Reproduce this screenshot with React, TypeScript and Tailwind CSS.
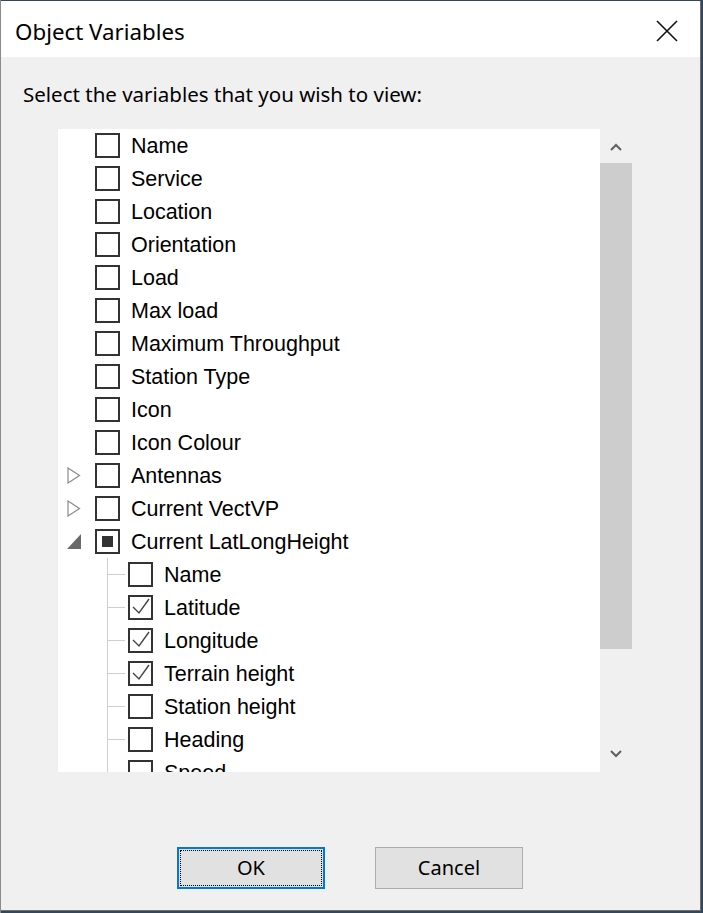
import React from "react";

type Row = {
  label: string;
  state?: "none" | "checked" | "partial";
  expander?: "closed" | "open";
};

const topRows: Row[] = [
  { label: "Name" },
  { label: "Service" },
  { label: "Location" },
  { label: "Orientation" },
  { label: "Load" },
  { label: "Max load" },
  { label: "Maximum Throughput" },
  { label: "Station Type" },
  { label: "Icon" },
  { label: "Icon Colour" },
  { label: "Antennas", expander: "closed" },
  { label: "Current VectVP", expander: "closed" },
  { label: "Current LatLongHeight", expander: "open", state: "partial" },
];

const childRows: Row[] = [
  { label: "Name" },
  { label: "Latitude", state: "checked" },
  { label: "Longitude", state: "checked" },
  { label: "Terrain height", state: "checked" },
  { label: "Station height" },
  { label: "Heading" },
  { label: "Speed" },
];

const Checkbox = ({ state = "none" }: { state?: Row["state"] }) => (
  <div className="relative flex h-[25px] w-[25px] shrink-0 items-center justify-center border-2 border-[#333333] bg-white">
    {state === "partial" && <div className="h-[11px] w-[11px] bg-[#333333]" />}
    {state === "checked" && (
      <svg width="21" height="21" viewBox="0 0 21 21" className="absolute left-0 top-0">
        <polyline points="3,10 9,16 19,2" fill="none" stroke="#444444" strokeWidth="1.4" />
      </svg>
    )}
  </div>
);

const Expander = ({ kind }: { kind?: Row["expander"] }) => {
  if (kind === "closed")
    return (
      <svg width="14" height="17" viewBox="0 0 14 17">
        <polygon points="1,1 12.5,8.5 1,16" fill="none" stroke="#8a8a8a" strokeWidth="1.2" />
      </svg>
    );
  if (kind === "open")
    return (
      <svg width="14" height="17" viewBox="0 0 14 17">
        <polygon points="14,1 14,16 0,16" fill="#6a6a6a" />
      </svg>
    );
  return <div className="w-[14px]" />;
};

const itemFont = { fontFamily: '"Liberation Sans", Arial, sans-serif' };

const App = () => {
  return (
    <div className="h-[913px] w-[703px] overflow-hidden border-l border-[#8a8a8a] bg-[#34465a] pt-px">
      <div
        className="flex h-[910px] w-[700px] flex-col border-r border-b border-[#6f6f6f] bg-[#f0f0f0]"
        style={{ fontFamily: '"Noto Sans", "Open Sans", sans-serif' }}
      >
        {/* title bar */}
        <div className="flex h-[56px] shrink-0 items-center justify-between bg-white pl-[14px] pr-[22px]">
          <span className="pt-[5px] text-[22.3px] text-black">Object Variables</span>
          <svg width="22" height="22" viewBox="0 0 22 22" className="mt-[3px]">
            <path d="M1 1 L21 21 M21 1 L1 21" stroke="#111" strokeWidth="1.6" />
          </svg>
        </div>

        <div className="pl-[22px] pt-[25px] text-[20.5px] leading-[24px] text-black">
          Select the variables that you wish to view:
        </div>

        {/* list + scrollbar */}
        <div className="ml-[57px] mt-[23px] flex h-[643px] w-[574px]">
          <div className="flex-1 overflow-hidden bg-white text-[21.5px] text-black" style={itemFont}>
            {topRows.map((r, i) => (
              <div key={i} className="flex h-[33px] items-center">
                <div className="flex w-[37px] items-center pl-[9px]">
                  <Expander kind={r.expander} />
                </div>
                <Checkbox state={r.state} />
                <span className="ml-[11px] whitespace-nowrap pt-[2px]">{r.label}</span>
              </div>
            ))}
            <div className="ml-[49px] border-l border-[#cfcfcf]">
              {childRows.map((r, i) => (
                <div key={i} className="flex h-[33px] items-center">
                  <div className="h-px w-[17px] bg-[#cfcfcf]" />
                  <div className="w-[3px]" />
                  <Checkbox state={r.state} />
                  <span className="ml-[11px] whitespace-nowrap pt-[2px]">{r.label}</span>
                </div>
              ))}
            </div>
          </div>
          <div className="flex w-[32px] flex-col bg-[#f0f0f0]">
            <div className="flex h-[34px] items-center justify-center pt-[2px]">
              <svg width="12" height="8" viewBox="0 0 12 8">
                <polyline points="1,7 6,2 11,7" fill="none" stroke="#606060" strokeWidth="2" />
              </svg>
            </div>
            <div className="h-[486px] bg-[#cdcdcd]" />
            <div className="flex-1" />
            <div className="flex h-[34px] items-center justify-center pb-[2px]">
              <svg width="12" height="8" viewBox="0 0 12 8">
                <polyline points="1,1 6,6 11,1" fill="none" stroke="#606060" strokeWidth="2" />
              </svg>
            </div>
          </div>
        </div>

        {/* buttons */}
        <div className="ml-[176px] mt-[75px] flex gap-[50px] text-[20px] text-black">
          <button className="flex h-[42px] w-[148px] items-center justify-center border-2 border-[#0078d7] bg-[#e1e1e1] p-px">
            <div className="flex h-full w-full items-center justify-center border border-dotted border-black">
              OK
            </div>
          </button>
          <button className="flex h-[42px] w-[148px] items-center justify-center border border-[#adadad] bg-[#e1e1e1]">
            Cancel
          </button>
        </div>
      </div>
    </div>
  );
};

export default App;
